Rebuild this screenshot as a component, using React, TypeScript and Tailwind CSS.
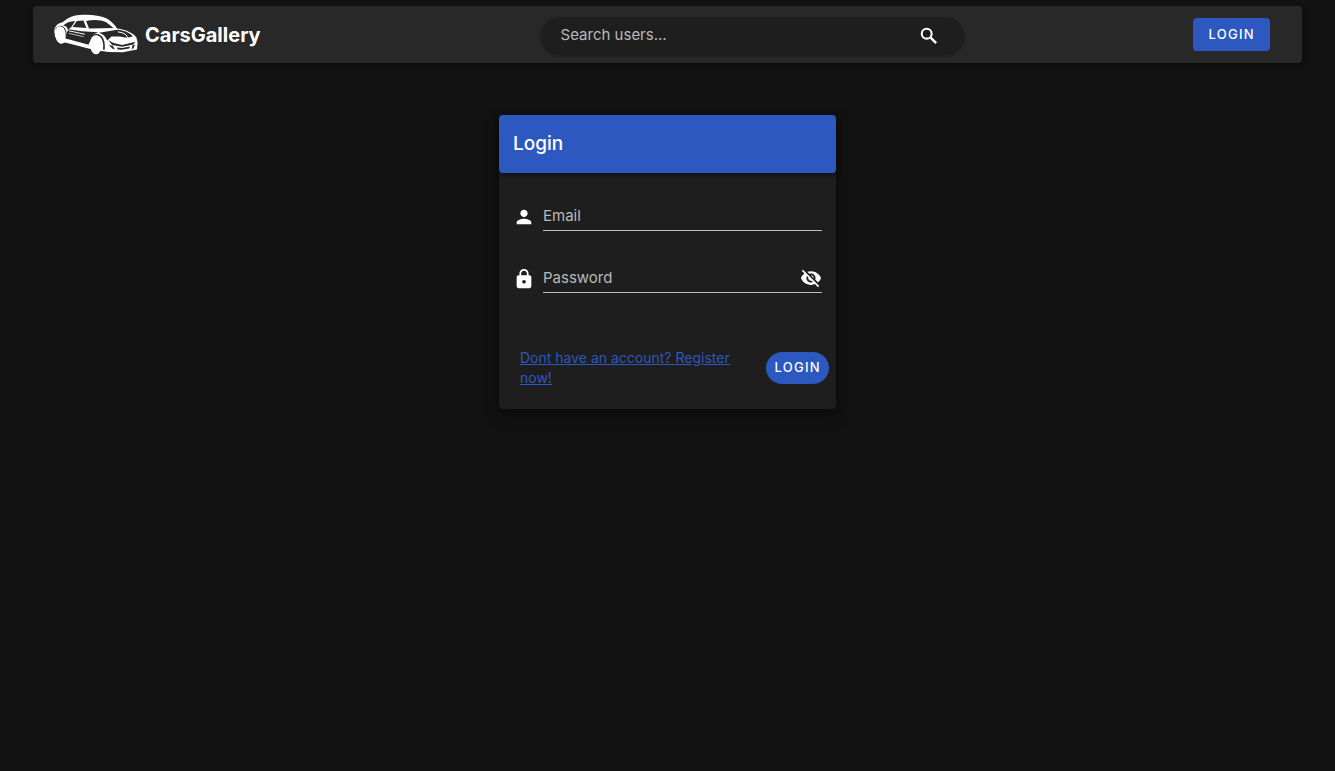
import { useState } from "react";
import { MdLock, MdPerson, MdVisibility, MdVisibilityOff } from "react-icons/md";

function CarLogo() {
  return (
    <svg viewBox="14 18 258 124" className="h-[41px] w-[86px]" aria-hidden="true">
      <path
        fill="#fff"
        d="M17 68C18 54 28 46 42 43C54 32 70 22 94 21C124 18 154 22 174 31C186 37 198 49 207 62C232 65 256 76 265 88L269 104L267 125L224 134L180 133L160 130L120 122L50 104L38 108C24 106 17 84 17 68Z"
      />
      <g fill="#282828">
        <path d="M44 53C52 44 64 40 80 39L68 58L58 66C56 58 52 54 44 53Z" />
        <path d="M85 39L105 38L114 60L72 57Z" />
        <path d="M113 39C137 34 160 36 174 43L196 60L122 62Z" />
        <path d="M60 64L100 70L150 73C132 78 123 92 121 111L51 92C52 80 55 72 60 64Z" />
        <path d="M152 75L208 66C230 68 249 77 254 86L236 90L214 86L190 86L177 98C172 86 164 79 152 75Z" />
        <path d="M180 97L196 106L222 112L262 102L256 110L222 117L192 112Z" />
        <path d="M182 112L194 114L200 125L192 122Z" />
        <path d="M206 119L222 121L246 116L243 122L220 126L209 125Z" />
        <path d="M253 113L261 110L256 122L251 124Z" />
      </g>
      <g fill="none" stroke="#fff" strokeLinecap="round">
        <path d="M62 69L108 79" strokeWidth="3" />
        <path d="M62 77L104 86" strokeWidth="2" />
        <path d="M210 72Q238 76 238 90" strokeWidth="3" />
      </g>
      <path d="M20 64Q35 48 47 60Q54 70 53 92" fill="none" stroke="#282828" strokeWidth="3" />
      <path d="M122 104Q125 81 144 80Q170 83 167 126" fill="none" stroke="#282828" strokeWidth="5" />
      <ellipse cx="35" cy="81" rx="15" ry="26" fill="#fff" transform="rotate(-6 35 81)" />
      <ellipse cx="143" cy="111" rx="18" ry="29" fill="#fff" />
    </svg>
  );
}

function SearchIcon() {
  return (
    <svg viewBox="0 0 24 24" className="size-[22px]" fill="none" stroke="currentColor" aria-hidden="true">
      <circle cx="9.5" cy="9.5" r="5.4" strokeWidth="2.3" />
      <path d="M13.8 13.8L19.8 19.8" strokeWidth="2.7" />
    </svg>
  );
}

const inputStyle =
  "min-w-0 flex-1 bg-transparent text-[15px] text-white placeholder:text-[#b9b9b9] focus:outline-none";

export default function App() {
  const [visible, setVisible] = useState(false);

  return (
    <div className="min-h-screen bg-[#121212] px-[33px] pt-1.5 font-['Inter',sans-serif] text-white">
      <header className="flex h-[57px] items-center rounded bg-[#282828] shadow-[0_2px_5px_rgba(0,0,0,0.5)]">
        <div className="w-2/5 pl-5">
          <a href="#" className="inline-flex items-center gap-1.5 align-middle">
            <CarLogo />
            <span className="text-xl font-bold">CarsGallery</span>
          </a>
        </div>
        <form
          role="search"
          onSubmit={(event) => event.preventDefault()}
          className="mt-0.5 flex h-[38px] w-1/3 items-center rounded-full bg-[#1e1e1e] pr-6 pl-5 shadow-[0_1px_3px_rgba(0,0,0,0.3)]"
        >
          <input type="search" aria-label="Search users" placeholder="Search users..." className={inputStyle} />
          <button type="submit" aria-label="Search">
            <SearchIcon />
          </button>
        </form>
        <div className="flex flex-1 justify-end pr-8">
          <button type="button" className="h-[33px] rounded bg-[#2c58c0] px-[15px] text-[13px] font-medium tracking-widest">
            LOGIN
          </button>
        </div>
      </header>

      <main className="mx-auto mt-[52px] max-w-[337px] rounded bg-[#1e1e1e] shadow-[0_6px_14px_rgba(0,0,0,0.5)]">
        <div className="flex h-[58px] items-center rounded bg-[#2c58c0] px-3.5 shadow-[0_2px_5px_rgba(0,0,0,0.5)]">
          <h1 className="text-[19px] font-medium">Login</h1>
        </div>
        <form onSubmit={(event) => event.preventDefault()}>
          <div className="flex flex-col gap-[33px] px-3.5 pt-[29px]">
            <div className="flex items-center gap-2">
              <label htmlFor="email" aria-label="Email">
                <MdPerson size={22} />
              </label>
              <div className="flex h-[29px] min-w-0 flex-1 items-center border-b border-[#bcbcbc]">
                <input id="email" type="email" placeholder="Email" className={inputStyle} />
              </div>
            </div>
            <div className="flex items-center gap-2">
              <label htmlFor="password" aria-label="Password">
                <MdLock size={22} />
              </label>
              <div className="flex h-[29px] min-w-0 flex-1 items-center border-b border-[#bcbcbc]">
                <input
                  id="password"
                  type={visible ? "text" : "password"}
                  placeholder="Password"
                  className={inputStyle}
                />
                <button
                  type="button"
                  aria-label={visible ? "Hide password" : "Show password"}
                  onClick={() => setVisible(!visible)}
                >
                  {visible ? <MdVisibility size={22} /> : <MdVisibilityOff size={22} />}
                </button>
              </div>
            </div>
          </div>
          <div className="flex items-center justify-between gap-8 pt-[55px] pr-[7px] pb-[21px] pl-[21px]">
            <a href="#" className="text-sm text-[#2c58c0] underline">
              Dont have an account? Register now!
            </a>
            <button
              type="submit"
              className="h-8 shrink-0 rounded-full bg-[#2c58c0] px-2 text-[13px] font-medium tracking-widest"
            >
              LOGIN
            </button>
          </div>
        </form>
      </main>
    </div>
  );
}
